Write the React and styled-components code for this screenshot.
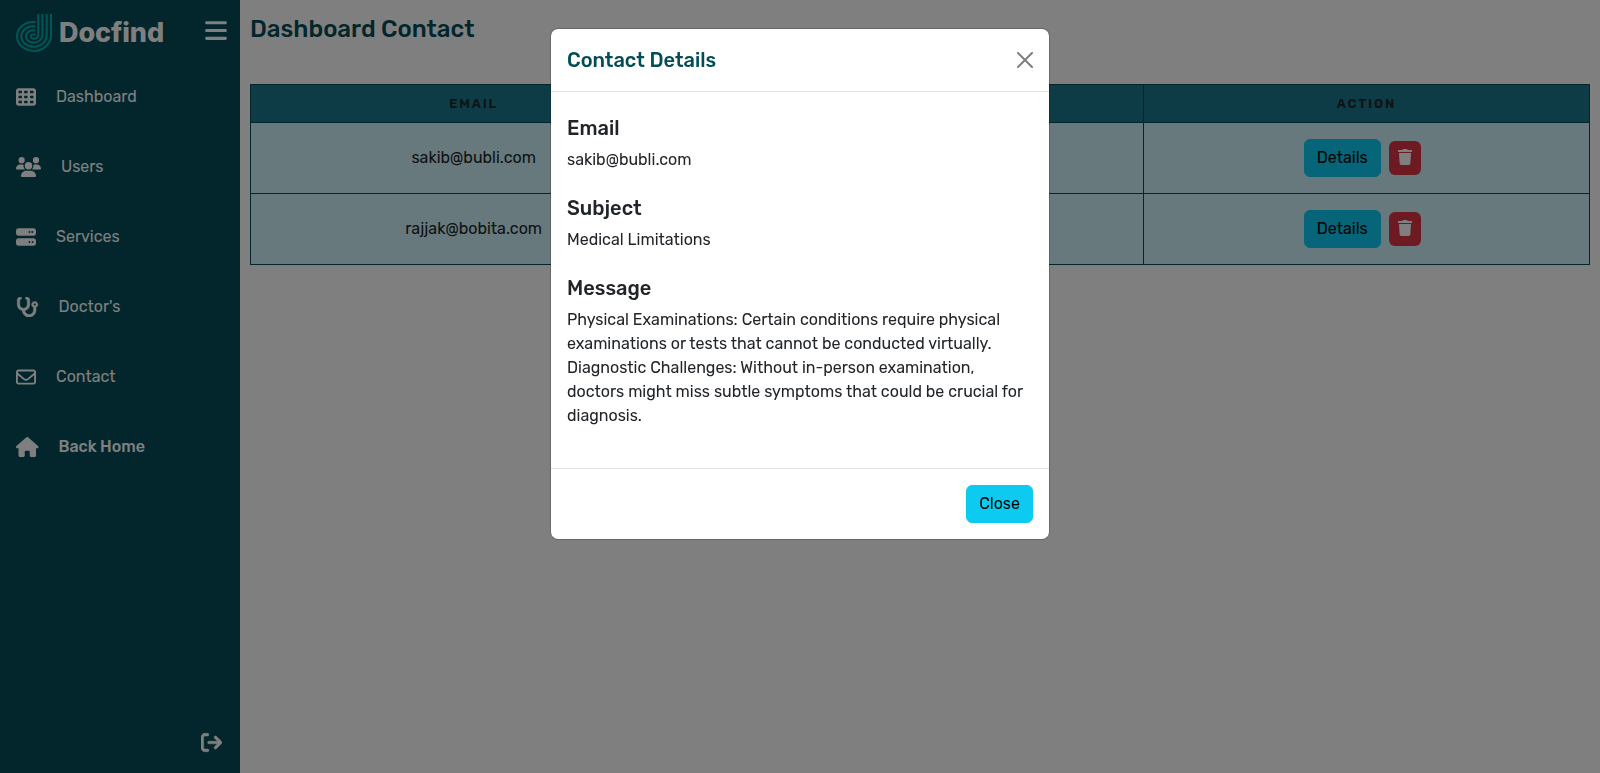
import React, { useState } from "react";
import styled, { createGlobalStyle } from "styled-components";
import {
  FaArrowRightFromBracket,
  FaBars,
  FaHouse,
  FaRegEnvelope,
  FaServer,
  FaStethoscope,
  FaTableCells,
  FaUsers,
} from "react-icons/fa6";
import { FaTrash } from "react-icons/fa";

const GlobalStyle = createGlobalStyle`
  *, *::before, *::after { box-sizing: border-box; }
  body {
    margin: 0;
    background: #fff;
    color: #212529;
    font-family: Rubik, Roboto, "Liberation Sans", sans-serif;
    font-size: 16px;
    line-height: 1.5;
  }
  h2, h5, p { margin: 0; }
  button { font: inherit; cursor: pointer; }
`;

const Page = styled.div`
  display: flex;
  height: 100vh;
  overflow: hidden;
`;

const Sidebar = styled.aside`
  display: flex;
  flex-direction: column;
  flex: 0 0 240px;
  background: #044d57;
  color: #fff;
`;

const SidebarTop = styled.div`
  display: flex;
  align-items: center;
  justify-content: space-between;
  height: 62px;
  padding: 3px 13px 0 15px;
`;

const Brand = styled.div`
  display: flex;
  align-items: center;
  gap: 6px;
`;

const BrandName = styled.span`
  font-family: Inter, Roboto, sans-serif;
  font-size: 27px;
  font-weight: 800;
  line-height: 38px;
  letter-spacing: -0.1px;
`;

const IconButton = styled.button`
  display: flex;
  padding: 0;
  border: 0;
  background: none;
  color: inherit;

  svg {
    width: ${(p) => p.$width}px;
    height: ${(p) => p.$height || p.$width}px;
  }
`;

const MenuButton = styled(IconButton)`
  margin-bottom: 4px;
`;

const LogoutButton = styled(IconButton)`
  path {
    stroke: currentColor;
    stroke-width: 12px;
  }
`;

const Nav = styled.nav`
  display: flex;
  flex-direction: column;
`;

const NavItem = styled.a`
  display: flex;
  align-items: center;
  gap: 20px;
  height: 70px;
  padding-left: 16px;
  color: inherit;
  font-weight: ${(p) => (p.$strong ? 500 : 400)};
  text-decoration: none;

  svg {
    width: ${(p) => p.$iconWidth}px;
    height: 20px;
    stroke: currentColor;
    stroke-width: ${(p) => p.$outline || 0}px;
  }
`;

const SidebarBottom = styled.div`
  display: flex;
  justify-content: flex-end;
  margin-top: auto;
  padding: 0 18px 20px 0;
`;

const Main = styled.main`
  flex: 1;
  padding: 15px 10px;
`;

const PageTitle = styled.h2`
  margin-bottom: 40px;
  color: #044d57;
  font-size: 24px;
  font-weight: 500;
  line-height: 29px;
`;

const Table = styled.table`
  width: 100%;
  border-collapse: collapse;
  table-layout: fixed;
  text-align: center;
`;

const HeadCell = styled.th`
  height: 38px;
  padding: 0;
  border: 1px solid #044d57;
  background: #1a788e;
  font-size: 13px;
  font-weight: 600;
  letter-spacing: 1.8px;
  text-transform: uppercase;
`;

const Cell = styled.td`
  height: 71px;
  padding: 0;
  border: 1px solid #044d57;
  background: #cef2f8;
`;

const Actions = styled.div`
  display: flex;
  align-items: center;
  justify-content: center;
  gap: 8px;
  padding-right: 8px;
`;

const Button = styled.button`
  height: 38px;
  padding: 0 12px;
  border: 1px solid #0dcaf0;
  border-radius: 6px;
  background: #0dcaf0;
  color: #000;
`;

const DeleteButton = styled.button`
  display: flex;
  align-items: flex-start;
  justify-content: center;
  width: 32px;
  height: 34px;
  padding: 8px 0 0;
  border: 0;
  border-radius: 6px;
  background: #dc3545;
  color: #fff;
`;

const Backdrop = styled.div`
  position: fixed;
  inset: 0;
  display: flex;
  align-items: flex-start;
  justify-content: center;
  padding-top: 28px;
  background: rgba(0, 0, 0, 0.5);
`;

const Dialog = styled.section`
  width: 500px;
  border: 1px solid rgba(0, 0, 0, 0.175);
  border-radius: 8px;
  background: #fff;
  background-clip: padding-box;
`;

const DialogHeader = styled.header`
  display: flex;
  align-items: center;
  justify-content: space-between;
  padding: 16px;
  border-bottom: 1px solid #dee2e6;
`;

const DialogTitle = styled.h5`
  color: #044d57;
  font-size: 20px;
  font-weight: 500;
  line-height: 30px;
`;

const CloseIcon = styled.svg`
  opacity: 0.5;
`;

const DialogBody = styled.div`
  display: flex;
  flex-direction: column;
  gap: 24px;
  padding: 24px 16px 40px;
`;

const FieldLabel = styled.h5`
  margin-bottom: 8px;
  font-size: 20px;
  font-weight: 500;
  line-height: 24px;
`;

const DialogFooter = styled.footer`
  display: flex;
  justify-content: flex-end;
  padding: 16px;
  border-top: 1px solid #dee2e6;
`;

const navItems = [
  { label: "Dashboard", icon: FaTableCells, width: 20 },
  { label: "Users", icon: FaUsers, width: 25 },
  { label: "Services", icon: FaServer, width: 20 },
  { label: "Doctor's", icon: FaStethoscope, width: 22.5, outline: 12 },
  { label: "Contact", icon: FaRegEnvelope, width: 20 },
  { label: "Back Home", icon: FaHouse, width: 22.5, strong: true },
];

const emails = ["sakib@bubli.com", "rajjak@bobita.com"];

const details = [
  { label: "Email", text: "sakib@bubli.com" },
  { label: "Subject", text: "Medical Limitations" },
  {
    label: "Message",
    text: "Physical Examinations: Certain conditions require physical examinations or tests that cannot be conducted virtually. Diagnostic Challenges: Without in-person examination, doctors might miss subtle symptoms that could be crucial for diagnosis.",
  },
];

function Logo() {
  return (
    <svg width="38" height="40" viewBox="15 13 38 40" fill="none" stroke="#00aeb2" strokeWidth="2">
      <path d="M35.5 22H33A16 14.5 0 0 0 17 36A17 15 0 0 0 34 51A17 16 0 0 0 51 35V14" />
      <path d="M35.5 26.2H33A11.7 10.2 0 0 0 21.3 36.2A12.7 10.6 0 0 0 34 46.8A12.7 11.8 0 0 0 46.7 35V14" />
      <path d="M35.5 30.4H32.5A6.5 6 0 0 0 26 36.4A7 6.2 0 0 0 33 42.6H34A8.4 7.6 0 0 0 42.4 35V14" />
      <path d="M35.5 34.4H33A2 2 0 0 0 33 38.4H35A3.2 3.2 0 0 0 38.2 35V14" />
    </svg>
  );
}

export default function App() {
  const [open, setOpen] = useState(true);
  return (
    <>
      <GlobalStyle />
      <Page>
        <Sidebar>
          <SidebarTop>
            <Brand>
              <Logo />
              <BrandName>Docfind</BrandName>
            </Brand>
            <MenuButton $width={22} $height={25} aria-label="Menu">
              <FaBars />
            </MenuButton>
          </SidebarTop>
          <Nav>
            {navItems.map(({ label, icon: Icon, width, outline, strong }) => (
              <NavItem key={label} $iconWidth={width} $outline={outline} $strong={strong}>
                <Icon />
                {label}
              </NavItem>
            ))}
          </Nav>
          <SidebarBottom>
            <LogoutButton $width={21} aria-label="Log out">
              <FaArrowRightFromBracket />
            </LogoutButton>
          </SidebarBottom>
        </Sidebar>
        <Main>
          <PageTitle>Dashboard Contact</PageTitle>
          <Table>
            <thead>
              <tr>
                <HeadCell>Email</HeadCell>
                <HeadCell>Subject</HeadCell>
                <HeadCell>Action</HeadCell>
              </tr>
            </thead>
            <tbody>
              {emails.map((email) => (
                <tr key={email}>
                  <Cell>{email}</Cell>
                  <Cell />
                  <Cell>
                    <Actions>
                      <Button onClick={() => setOpen(true)}>Details</Button>
                      <DeleteButton aria-label="Delete">
                        <FaTrash />
                      </DeleteButton>
                    </Actions>
                  </Cell>
                </tr>
              ))}
            </tbody>
          </Table>
        </Main>
      </Page>
      {open && (
        <Backdrop>
          <Dialog role="dialog" aria-modal="true">
            <DialogHeader>
              <DialogTitle>Contact Details</DialogTitle>
              <IconButton $width={16} aria-label="Close" onClick={() => setOpen(false)}>
                <CloseIcon viewBox="0 0 16 16">
                  <path d="M.293.293a1 1 0 0 1 1.414 0L8 6.586 14.293.293a1 1 0 1 1 1.414 1.414L9.414 8l6.293 6.293a1 1 0 0 1-1.414 1.414L8 9.414l-6.293 6.293a1 1 0 0 1-1.414-1.414L6.586 8 .293 1.707a1 1 0 0 1 0-1.414z" />
                </CloseIcon>
              </IconButton>
            </DialogHeader>
            <DialogBody>
              {details.map(({ label, text }) => (
                <div key={label}>
                  <FieldLabel>{label}</FieldLabel>
                  <p>{text}</p>
                </div>
              ))}
            </DialogBody>
            <DialogFooter>
              <Button onClick={() => setOpen(false)}>Close</Button>
            </DialogFooter>
          </Dialog>
        </Backdrop>
      )}
    </>
  );
}
